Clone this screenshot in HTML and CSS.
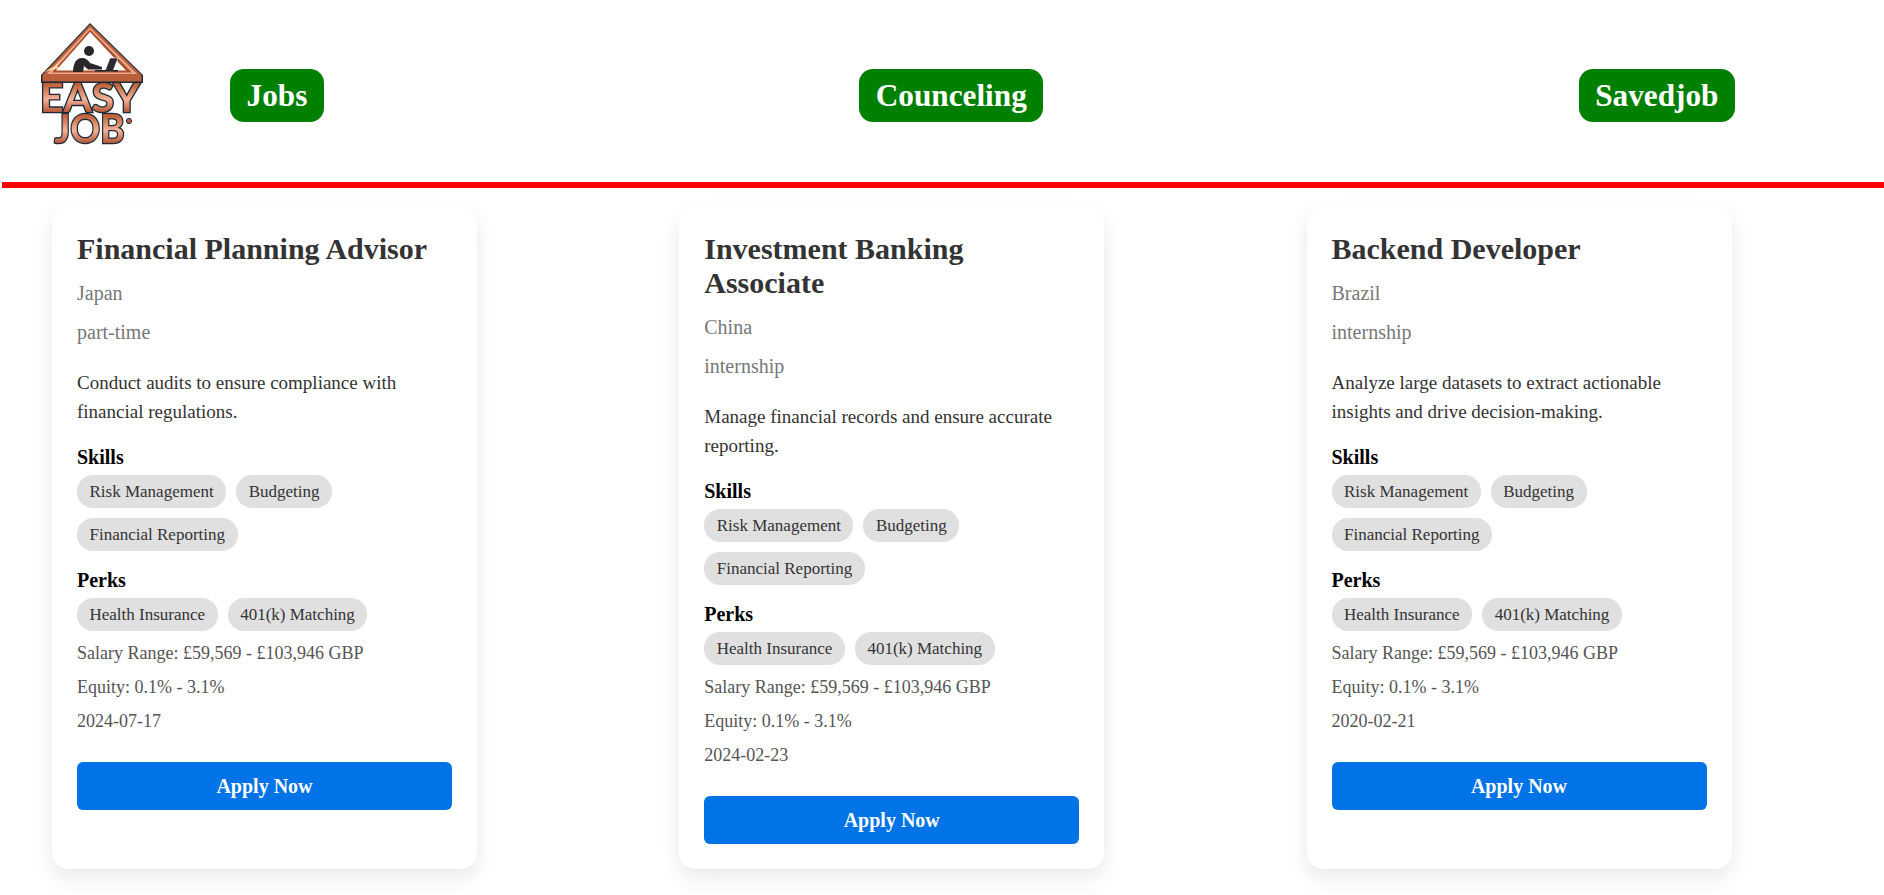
FILE: index.html
```html
<!DOCTYPE html>
<html lang="en">
<head>
    <meta charset="UTF-8">
    <meta name="viewport" content="width=device-width, initial-scale=1.0">
    <title>Easy Job</title>
    <link rel="stylesheet" href="styles.css">
</head>
<body>
    <header class="header">
        <svg class="logo" viewBox="0 0 104 126" width="104" height="126">
            <defs>
                <linearGradient id="copper" x1="0" y1="0" x2="0" y2="1">
                    <stop offset="0.2" stop-color="#b9572f"/>
                    <stop offset="0.55" stop-color="#f5b398"/>
                    <stop offset="0.85" stop-color="#ab4b2a"/>
                </linearGradient>
            </defs>
            <path class="roof-outline" d="M50 0 L103 52 V60 H1 V52 Z"/>
            <path class="roof-copper" d="M50 1.5 L101.5 52 V58.5 H2.5 V52 Z"/>
            <path class="roof-shine" d="M50 4.5 L97 51 H7 Z"/>
            <path class="roof-band" d="M50 6.5 L92 49.5 H12 Z"/>
            <path class="roof-inner" d="M50 9 L16 47.5 H86 Z"/>
            <circle class="figure" cx="49" cy="28" r="5"/>
            <path class="figure" d="M33 49 C33 41 36 35 42 35 C46 35 48 37 50 40 L62 44 V46.5 H48 L44 43 L43 49 Z"/>
            <path class="laptop" d="M70 35 H78 L73 48 H65 Z"/>
            <rect class="figure" x="55" y="47" width="23" height="1.6"/>
            <path class="spark" d="M4 49 L15 43 L19 38 L17 44 L24 45 L15 46 Z"/>
            <text class="logo-text" x="50" y="89" text-anchor="middle" textLength="100" lengthAdjust="spacingAndGlyphs">EASY</text>
            <text class="logo-text" x="49.5" y="120" text-anchor="middle" textLength="70" lengthAdjust="spacingAndGlyphs">JOB</text>
            <circle class="logo-mark" cx="89" cy="98" r="2.6"/>
        </svg>
        <nav class="nav">
            <a href="#" class="nav-link">Jobs</a>
            <a href="#" class="nav-link">Counceling</a>
            <a href="#" class="nav-link">Savedjob</a>
        </nav>
    </header>

    <main class="job-grid">
        <div class="job-card">
            <h2>Financial Planning Advisor</h2>
            <p class="meta">Japan</p>
            <p class="meta">part-time</p>
            <p class="desc">Conduct audits to ensure compliance with financial regulations.</p>
            <h4>Skills</h4>
            <div class="tags">
                <span class="tag">Risk Management</span>
                <span class="tag">Budgeting</span>
                <span class="tag">Financial Reporting</span>
            </div>
            <h4>Perks</h4>
            <div class="tags">
                <span class="tag">Health Insurance</span>
                <span class="tag">401(k) Matching</span>
            </div>
            <p class="info">Salary Range: £59,569 - £103,946 GBP</p>
            <p class="info">Equity: 0.1% - 3.1%</p>
            <p class="info">2024-07-17</p>
            <button class="apply-btn">Apply Now</button>
        </div>

        <div class="job-card">
            <h2>Investment Banking Associate</h2>
            <p class="meta">China</p>
            <p class="meta">internship</p>
            <p class="desc">Manage financial records and ensure accurate reporting.</p>
            <h4>Skills</h4>
            <div class="tags">
                <span class="tag">Risk Management</span>
                <span class="tag">Budgeting</span>
                <span class="tag">Financial Reporting</span>
            </div>
            <h4>Perks</h4>
            <div class="tags">
                <span class="tag">Health Insurance</span>
                <span class="tag">401(k) Matching</span>
            </div>
            <p class="info">Salary Range: £59,569 - £103,946 GBP</p>
            <p class="info">Equity: 0.1% - 3.1%</p>
            <p class="info">2024-02-23</p>
            <button class="apply-btn">Apply Now</button>
        </div>

        <div class="job-card">
            <h2>Backend Developer</h2>
            <p class="meta">Brazil</p>
            <p class="meta">internship</p>
            <p class="desc">Analyze large datasets to extract actionable insights and drive decision-making.</p>
            <h4>Skills</h4>
            <div class="tags">
                <span class="tag">Risk Management</span>
                <span class="tag">Budgeting</span>
                <span class="tag">Financial Reporting</span>
            </div>
            <h4>Perks</h4>
            <div class="tags">
                <span class="tag">Health Insurance</span>
                <span class="tag">401(k) Matching</span>
            </div>
            <p class="info">Salary Range: £59,569 - £103,946 GBP</p>
            <p class="info">Equity: 0.1% - 3.1%</p>
            <p class="info">2020-02-21</p>
            <button class="apply-btn">Apply Now</button>
        </div>

        <!-- next row, only its top edge shows -->
        <div class="job-card next-row"></div>
        <div class="job-card next-row"></div>
        <div class="job-card next-row"></div>
    </main>
</body>
</html>
```

FILE: styles.css
```css
html, body {
    height: 100%;
    overflow: hidden;
}
body {
    margin: 0;
    font-family: "Liberation Serif", serif;
    background: #fff;
}
.header {
    display: flex;
    align-items: flex-start;
    height: 159px;
    margin-left: 2px;
    padding: 23px 0 0 38px;
    border-bottom: 6px solid #f00;
}
.logo {
    flex: none;
    overflow: visible;
    filter: blur(0.4px);
}
.roof-outline {
    fill: #1f2d38;
}
.roof-copper {
    fill: #b9603a;
}
.roof-shine {
    fill: #eeaa8c;
}
.roof-band {
    fill: #a9502e;
}
.roof-inner {
    fill: #fff;
}
.figure {
    fill: #2a2626;
}
.laptop {
    fill: #2a2a30;
    stroke: #fff;
    stroke-width: 0.6px;
}
.spark {
    fill: #fbd9a8;
}
.logo-text {
    font-family: "Lato", "Liberation Sans", sans-serif;
    font-weight: 700;
    font-size: 40px;
    fill: url(#copper);
    stroke: #1b2a36;
    stroke-width: 2.6px;
    paint-order: stroke;
}
.logo-mark {
    fill: #b5624a;
    stroke: #1b2a36;
}
.nav {
    display: flex;
    justify-content: space-between;
    width: 1505px;
    margin: 46px 0 0 86px;
}
.nav-link {
    padding: 8px 16.5px;
    border-radius: 14px;
    background: #008000;
    color: #fff;
    font-size: 31.25px;
    font-weight: 700;
    line-height: 37px;
    text-decoration: none;
}
.job-grid {
    display: grid;
    grid-template-columns: repeat(3, 425px);
    column-gap: 202.25px;
    row-gap: 24px;
    box-sizing: border-box;
    height: calc(100vh - 188px);
    overflow: hidden;
    padding: 19px 0 0 52px;
}
.job-card {
    padding: 25px;
    border-radius: 16px;
    background: #fff;
    box-shadow: 0 8px 20px rgba(0, 0, 0, 0.09);
}
.next-row {
    height: 200px;
}
.job-card h2 {
    margin: 0 0 16px;
    color: #333;
    font-size: 30px;
    line-height: 34px;
}
.meta {
    margin: 0 0 16px;
    color: #777;
    font-size: 20px;
    line-height: 23px;
}
.desc {
    margin: 24px 0 20px;
    color: #333;
    font-size: 19px;
    line-height: 29px;
}
.job-card h4 {
    margin: 18px 0 6px;
    color: #000;
    font-size: 20px;
    line-height: 23px;
}
.tags {
    display: flex;
    flex-wrap: wrap;
    gap: 10px;
    margin-bottom: 12px;
}
.tag {
    padding: 0 12.5px;
    border-radius: 16px;
    background: #e0e0e0;
    color: #333;
    font-size: 17px;
    line-height: 33px;
}
.info {
    margin: 0 0 13px;
    color: #555;
    font-size: 18px;
    line-height: 21px;
}
.apply-btn {
    display: block;
    width: 100%;
    height: 48px;
    margin-top: 30px;
    border: 0;
    border-radius: 6px;
    background: #0073e6;
    color: #fff;
    font-family: inherit;
    font-size: 20px;
    font-weight: 700;
}
```
